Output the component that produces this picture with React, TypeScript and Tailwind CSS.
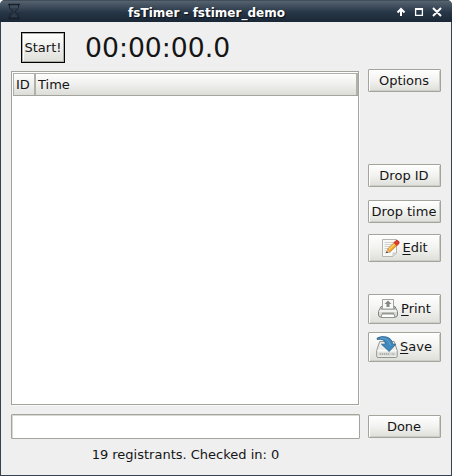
import type { ReactNode } from "react";

const raised =
  "flex w-[73px] shrink-0 items-center justify-center whitespace-nowrap rounded-[1px] border border-[#a3a59d] bg-linear-to-b from-white via-[#f2f2f0] to-[#deded9] pr-px shadow-[inset_1px_1px_0_#fff,inset_-1px_-1px_0_#cdcec8]";

function Button({ className, children }: { className: string; children: ReactNode }) {
  return <button className={`${raised} ${className}`}>{children}</button>;
}

function Hourglass() {
  return (
    <svg className="shrink-0" width="14" height="17" viewBox="0 0 14 17" fill="none" stroke="#18212b">
      <path d="M1 1.500h12M1 15.500h12" strokeWidth="1.500" />
      <path d="M2.500 2v2.500c0 2 3.500 2.700 3.500 4s-3.500 2-3.500 4V15M11.500 2v2.500c0 2-3.500 2.700-3.500 4s3.500 2 3.500 4V15" />
      <path d="M4 5h6L7 7.500zM7 10.500l3 3.500H4z" fill="#303c48" stroke="none" />
    </svg>
  );
}

function EditIcon() {
  return (
    <svg width="20" height="20" viewBox="0 0 20 20">
      <path d="M2.500 1.500h14v13.500l-3.500 3.500h-10.500z" fill="#f9f9f7" stroke="#b5b6b1" />
      <path d="M4.500 4.500h9M4.500 6.500h8M4.500 8.500h6M4.500 10.500h4M4.500 12.500h2M4.500 14.500h6" stroke="#d0d2cf" />
      <path d="M6.500 14.500l1.500-3.800 7-7 2.800 2.800-7.200 7z" fill="#f5a52c" stroke="#c47b35" strokeWidth=".8" />
      <path d="M9 11.500l7-7" stroke="#ffd260" strokeWidth="1.200" />
      <path d="M6.300 14.700l1.400-3 1.900 1.900z" fill="#dfc39a" />
      <path d="M5.700 15.200l1.200-2 1.200 1.200z" fill="#333" />
      <path d="M14 4.700l2-2.200c1.500-.9 3.900 1.300 3 3l-2.200 2.100z" fill="#e23a2c" stroke="#b62a20" strokeWidth=".7" />
      <path d="M13 18v-3h3" fill="#e2e2e0" stroke="#b5b5b2" strokeWidth=".7" />
    </svg>
  );
}

function PrintIcon() {
  return (
    <svg width="22" height="22" viewBox="0 0 22 22">
      <path d="M4 8.500h14l2.500 5v3.500q0 2-2 2h-15q-2 0-2-2v-3.500z" fill="#d9dad7" stroke="#838580" />
      <path d="M5 9h12.500l1 2.500h-15z" fill="#959792" />
      <path d="M5.500 1.500h11v9.500h-11z" fill="#fafafa" stroke="#a2a49f" />
      <path d="M11 2.500l3.500 3.500h-2v3h-3V6h-2z" fill="#858883" />
      <path d="M2.500 13h17" stroke="#fafafa" strokeWidth="1.500" />
      <path d="M5 14.500h12v1.500H5z" fill="#a3a5a0" />
      <path d="M5 16h12l1 3.500H4z" fill="#fff" stroke="#888a85" strokeWidth=".9" />
    </svg>
  );
}

function SaveIcon() {
  return (
    <svg width="22" height="23" viewBox="0 0 22 23">
      <path d="M3.700 5.500h14.500l3 9v5.500q0 1.500-1.500 1.500H2Q.7 21.500.7 20v-5.500z" fill="#ecedeb" stroke="#92948f" />
      <path d="M1.500 14.700h19" stroke="#fff" />
      <path d="M2.500 16.500h17v3h-17z" fill="#d2d4d1" />
      <path d="M4.500 17v2M6.500 17v2M8.500 17v2M10.500 17v2M12.500 17v2M17 17v2" stroke="#a3a6a1" strokeWidth=".8" />
      <path d="M1.200 2Q5.500-.3 10.500 1q5.800 1.700 6 7.200h3.300L13.200 15.500 5.500 8.200h3.800C9.400 4.600 6.500 2.500 1.200 3.500z" fill="#4089bf" stroke="#2d6693" strokeWidth=".9" />
      <path d="M4.500 2q8.700-.2 9.700 7.300" fill="none" stroke="#67a4ce" />
    </svg>
  );
}

export default function App() {
  return (
    <div className="h-[476px] w-[452px] bg-white font-['DejaVu_Sans',sans-serif] text-[13px] leading-4 text-[#151515]">
      <div className="flex h-full flex-col overflow-hidden rounded-t-[5px] bg-[#36424f]">
        <header className="flex h-[22px] shrink-0 items-center border-t border-[#414d59] bg-linear-to-b from-[#566370] via-[#273646] via-55% to-[#1a2736] pl-[7px] pr-[9px]">
          <Hourglass />
          <h1 className="flex-1 pr-[4px] pt-[3px] text-center text-[12px] font-bold leading-4 text-white [text-shadow:1px_1px_1px_#0a111a]">
            fsTimer - fstimer_demo
          </h1>
          <svg className="shrink-0" width="47" height="12" viewBox="0 0 47 12" fill="none" stroke="white" strokeWidth="2">
            <path d="M5 10V3M1.500 6.500L5 3l3.500 3.500M37 2l8 8M45 2l-8 8" />
            <path d="M19.600 2.600h6.800v6.800h-6.800z" strokeWidth="1.300" />
            <path d="M19 3h8" />
          </svg>
        </header>
        <main className="mx-px mb-px flex min-h-0 flex-1 bg-[#efefef] pl-[10px]">
          <section className="flex w-[349px] shrink-0 flex-col">
            <div className="flex h-[49px] items-center pl-[10px] pt-[2px]">
              <button className="h-[31px] w-[44px] border border-black bg-linear-to-b from-white to-[#dededa] p-0 shadow-[inset_1px_1px_0_#aaaca5,inset_-1px_-1px_0_#aaaca5,inset_2px_2px_0_#fff]">
                Start!
              </button>
              <time className="ml-5 text-[26.670px] leading-8">00:00:00.0</time>
            </div>
            <div className="h-[334px] w-[348px] shrink-0 border border-[#a3a59d] bg-white py-px pl-px shadow-[1px_1px_0_#fafafa]">
              <div className="flex h-[23px] border-b border-[#a3a59d] bg-linear-to-b from-white via-[#f0f0ee] to-[#dcdcd8]">
                <span className="w-[23px] border-l border-r-2 border-t border-[#b0b2aa] pl-[2px] pt-[3px]">ID</span>
                <span className="flex-1 border-r-2 border-t border-[#b0b2aa] pl-[2px] pt-[3px]">Time</span>
              </div>
            </div>
            <input className="mt-[9px] h-[25px] w-[349px] shrink-0 rounded-[1px] border border-[#a3a59d] bg-white px-2 shadow-[inset_1px_1px_0_#d8d9d4] outline-none" />
            <p className="pt-[8px] text-center">19 registrants. Checked in: 0</p>
          </section>
          <aside className="ml-2 flex w-[73px] flex-col pt-[47px]">
            <Button className="h-[23px]">Options</Button>
            <Button className="mt-[72px] h-[23px]">Drop ID</Button>
            <Button className="mt-[13px] h-[23px]">Drop time</Button>
            <Button className="mt-[11px] h-[28px]">
              <EditIcon />
              <span className="ml-[2px]"><u className="underline-offset-2">E</u>dit</span>
            </Button>
            <Button className="mt-[32px] h-[30px]">
              <PrintIcon />
              <span className="ml-[2px]"><u className="underline-offset-2">P</u>rint</span>
            </Button>
            <Button className="mt-2 h-[30px]">
              <SaveIcon />
              <span className="ml-[2px]"><u className="underline-offset-2">S</u>ave</span>
            </Button>
            <Button className="mt-[53px] h-[23px]">Done</Button>
          </aside>
        </main>
      </div>
    </div>
  );
}
